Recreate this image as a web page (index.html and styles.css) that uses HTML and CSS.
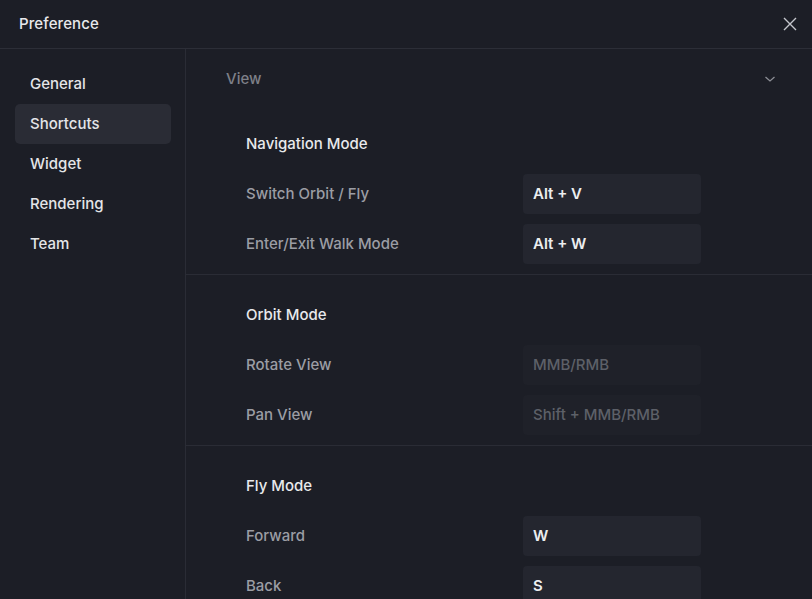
FILE: index.html
```html
<!DOCTYPE html>
<html>
<head>
<meta charset="utf-8">
<link rel="stylesheet" href="styles.css">
</head>
<body>
<div class="dialog">
  <header class="topbar">
    <span class="title">Preference</span>
    <svg class="close" width="14" height="14" viewBox="0 0 14 14"><path d="M1 1L13 13M13 1L1 13" stroke="#c4c6cc" stroke-width="1.4" fill="none"/></svg>
  </header>
  <div class="main">
    <nav class="sidebar">
      <div class="nav-item">General</div>
      <div class="nav-item active">Shortcuts</div>
      <div class="nav-item">Widget</div>
      <div class="nav-item">Rendering</div>
      <div class="nav-item">Team</div>
    </nav>
    <section class="content">
      <div class="group-head">
        <span class="group-title">View</span>
        <svg class="chev" width="12" height="8" viewBox="0 0 12 8"><path d="M1.5 2L6 6L10.5 2" stroke="#8c8e95" stroke-width="1.3" fill="none"/></svg>
      </div>
      <div class="section first">
        <div class="sec-title">Navigation Mode</div>
        <div class="row"><span class="label">Switch Orbit / Fly</span><span class="key">Alt + V</span></div>
        <div class="row"><span class="label">Enter/Exit Walk Mode</span><span class="key">Alt + W</span></div>
      </div>
      <div class="section">
        <div class="sec-title">Orbit Mode</div>
        <div class="row"><span class="label">Rotate View</span><span class="key disabled">MMB/RMB</span></div>
        <div class="row"><span class="label">Pan View</span><span class="key disabled">Shift + MMB/RMB</span></div>
      </div>
      <div class="section last">
        <div class="sec-title">Fly Mode</div>
        <div class="row"><span class="label">Forward</span><span class="key">W</span></div>
        <div class="row"><span class="label">Back</span><span class="key">S</span></div>
      </div>
    </section>
  </div>
</div>
</body>
</html>
```

FILE: styles.css
```css
* { box-sizing: border-box; }
html, body {
  margin: 0;
  padding: 0;
  background: #1c1e26;
  height: 100%;
  overflow: hidden;
}
body {
  font-family: Inter, "Noto Sans", sans-serif;
  font-size: 15px;
  color: #e4e5e8;
}
.dialog {
  width: 812px;
  height: 599px;
  display: flex;
  flex-direction: column;
}
.topbar {
  height: 49px;
  flex: 0 0 49px;
  border-bottom: 1px solid #2c2e37;
  display: flex;
  align-items: center;
  justify-content: space-between;
  padding: 0 15px 1px 19px;
}
.title {
  font-weight: 500;
  color: #e8e9ec;
  letter-spacing: 0.1px;
}
.close { display: block; }
.main {
  flex: 1;
  display: flex;
  min-height: 0;
}
.sidebar {
  width: 186px;
  flex: 0 0 186px;
  border-right: 1px solid #2a2c35;
  padding: 15px 14px 0 15px;
  display: flex;
  flex-direction: column;
}
.nav-item {
  height: 40px;
  display: flex;
  align-items: center;
  padding: 0 0 2px 15px;
  border-radius: 5px;
  font-weight: 500;
  color: #e4e5e8;
}
.nav-item.active {
  background: #2a2c35;
}
.content {
  flex: 1;
  display: flex;
  flex-direction: column;
  overflow: hidden;
}
.group-head {
  height: 58px;
  flex: 0 0 58px;
  display: flex;
  align-items: center;
  justify-content: space-between;
  padding: 0 36px 0 40px;
}
.group-title {
  font-weight: 500;
  color: #7e8088;
}
.chev { display: block; margin-top: 2px; }
.section {
  padding: 30px 0 10px 60px;
  border-bottom: 1px solid #2a2c35;
  display: flex;
  flex-direction: column;
  gap: 10px;
  flex: 0 0 auto;
}
.section.first { padding-top: 27px; padding-bottom: 10px; }
.section.last { border-bottom: none; }
.sec-title {
  height: 20px;
  line-height: 20px;
  font-weight: 500;
  color: #e8e9ec;
  margin-bottom: 10px;
}
.row {
  height: 40px;
  display: flex;
  align-items: center;
  padding-bottom: 1px;
}
.label {
  width: 277px;
  color: #9b9da4;
  font-weight: 500;
}
.key {
  width: 178px;
  height: 40px;
  background: #24262f;
  border-radius: 4px;
  display: flex;
  align-items: center;
  padding: 0 0 1px 10px;
  font-weight: 600;
  color: #eceef0;
}
.key.disabled {
  background: #1f2129;
  color: #5d6068;
  font-weight: 500;
}
```
